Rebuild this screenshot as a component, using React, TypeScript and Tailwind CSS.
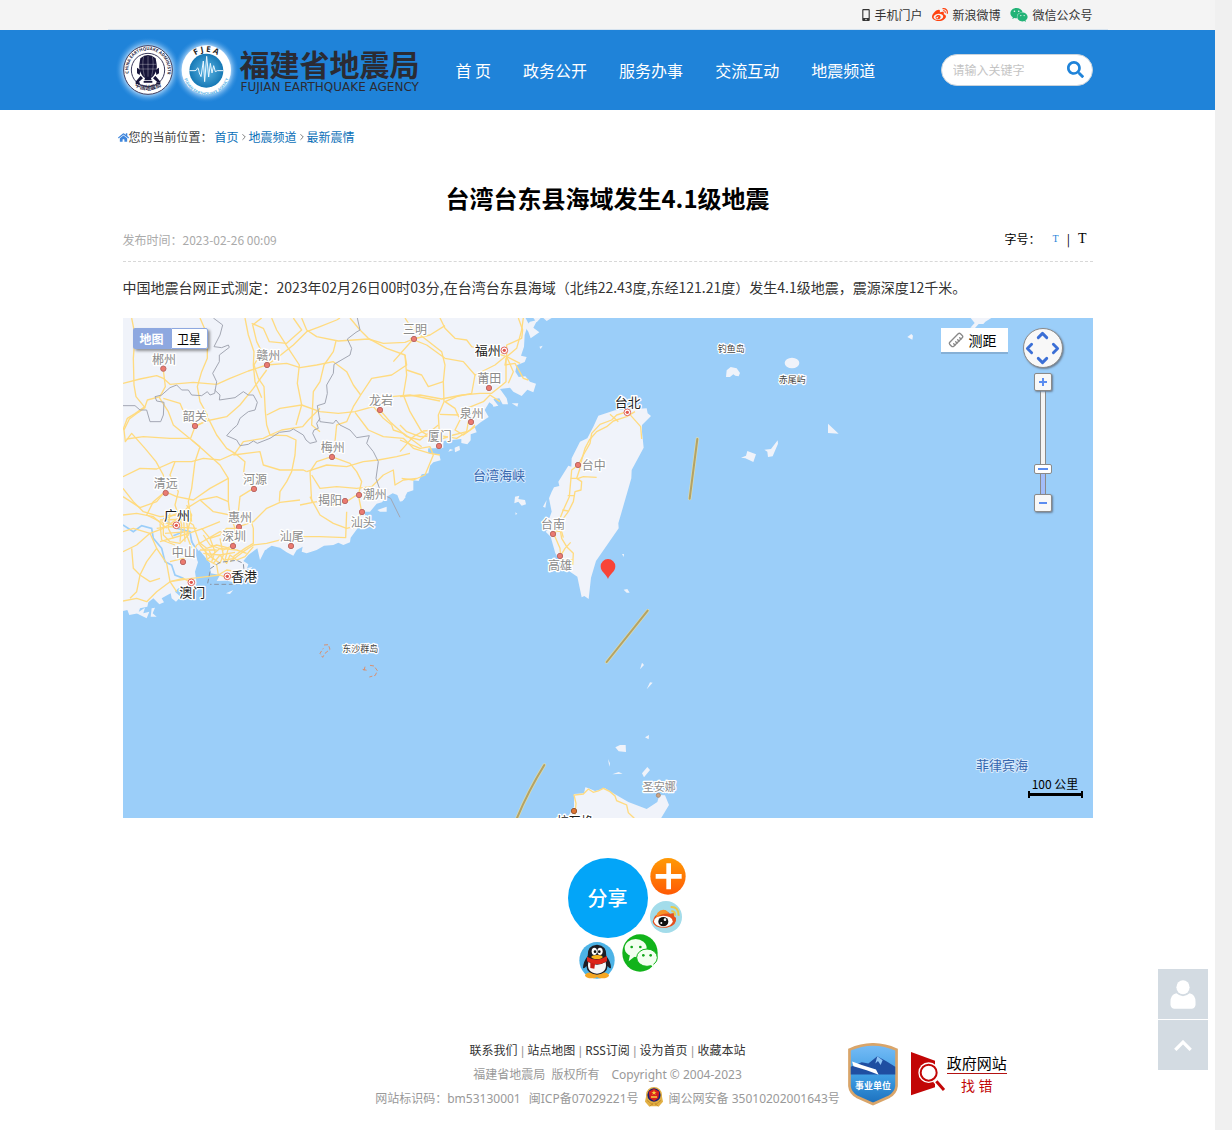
import { FaHome, FaMobileAlt, FaSearch, FaWeibo, FaWeixin } from "react-icons/fa";
import {
  ChevronDown,
  ChevronLeft,
  ChevronRight,
  ChevronUp,
  Ruler,
} from "lucide-react";

const navItems = ["首 页", "政务公开", "服务办事", "交流互动", "地震频道"];

const footerLinks = ["联系我们", "站点地图", "RSS订阅", "设为首页", "收藏本站"];

interface Place {
  name: string;
  x: number;
  y: number;
  dotX: number;
  dotY: number;
}

// map units are a third of a pixel
const cities: Place[] = [
  { name: "三明", x: 876, y: 48, dotX: 873, dotY: 63 },
  { name: "郴州", x: 123, y: 137, dotX: 121, dotY: 152 },
  { name: "赣州", x: 436, y: 126, dotX: 432, dotY: 141 },
  { name: "韶关", x: 215, y: 310, dotX: 216, dotY: 324 },
  { name: "龙岩", x: 774, y: 262, dotX: 771, dotY: 276 },
  { name: "梅州", x: 629, y: 403, dotX: 627, dotY: 417 },
  { name: "清远", x: 128, y: 509, dotX: 128, dotY: 525 },
  { name: "河源", x: 396, y: 499, dotX: 393, dotY: 513 },
  { name: "揭阳", x: 621, y: 562, dotX: 666, dotY: 549 },
  { name: "潮州", x: 755, y: 544, dotX: 708, dotY: 531 },
  { name: "汕头", x: 719, y: 626, dotX: 717, dotY: 582 },
  { name: "惠州", x: 351, y: 612, dotX: 348, dotY: 627 },
  { name: "深圳", x: 333, y: 670, dotX: 330, dotY: 684 },
  { name: "汕尾", x: 506, y: 669, dotX: 504, dotY: 684 },
  { name: "中山", x: 182, y: 717, dotX: 180, dotY: 732 },
  { name: "莆田", x: 1099, y: 195, dotX: 1098, dotY: 210 },
  { name: "泉州", x: 1046, y: 299, dotX: 1044, dotY: 312 },
  { name: "厦门", x: 950, y: 369, dotX: 948, dotY: 384 },
  { name: "台中", x: 1412, y: 455, dotX: 1365, dotY: 441 },
  { name: "台南", x: 1290, y: 633, dotX: 1290, dotY: 648 },
  { name: "高雄", x: 1311, y: 756, dotX: 1311, dotY: 714 },
];

const capitals: Place[] = [
  { name: "福州", x: 1094, y: 112, dotX: 1144, dotY: 97 },
  { name: "广州", x: 162, y: 607, dotX: 160, dotY: 622 },
  { name: "香港", x: 363, y: 788, dotX: 313, dotY: 775 },
  { name: "澳门", x: 208, y: 838, dotX: 205, dotY: 793 },
  { name: "台北", x: 1514, y: 267, dotX: 1513, dotY: 283 },
];

const roads = [
  "35 9 45 60 40 130 42 210 48 245 75 278 55 292 28 312 12 345 16 380 35 355 75 400 108 440 130 480 135 530",
  "9 345 22 310 45 296 75 275 82 255 120 245",
  "130 165 136 215 118 248 145 290 160 330 190 355 215 375 250 405 300 450 325 490 325 560 330 600",
  "9 205 60 192 110 182 130 190 150 208 220 202 290 208 330 190 385 168 440 150 470 130 520 90 560 50 600 35 650 15 660 9",
  "240 9 262 60 262 130 245 170 232 215 240 260 262 300 255 320 225 335 212 370 150 370 70 365 20 372",
  "130 250 180 265 195 300 225 333 258 318 320 305 360 270 400 220 440 165",
  "265 310 290 360 320 400 345 415 370 380 430 370 450 360 500 362 528 375 525 420 515 470 500 500 480 530 478 560",
  "375 9 385 60 402 110 400 150 405 200 425 248",
  "402 150 415 190 432 215 436 290 440 330 450 360 485 345 548 335 565 315 600 280",
  "425 9 398 30 410 80 425 110 402 150",
  "395 25 430 40 448 80 500 85 545 45 520 9",
  "455 9 470 45 505 100 538 150 532 205 545 270 528 330",
  "440 150 500 145 540 158 590 150 640 140 680 170 700 210 722 240",
  "545 9 560 45 590 65 655 78 745 72 790 85 855 82 880 72",
  "648 78 640 110 612 150 600 200 580 230 575 330 600 350",
  "440 300 480 280 545 270 600 290 655 295 705 290 760 275 815 245 870 240 960 258",
  "722 240 700 275 680 320 650 330 645 380 635 425 590 440 570 470 575 560",
  "722 240 755 190 815 180 860 150 855 120 800 100 745 70 720 45 690 9",
  "705 292 745 345 790 365 850 370 880 400 930 415 960 420",
  "780 285 810 320 860 365 900 375 930 350 955 330",
  "760 275 790 310 815 330 820 345 850 355 905 395",
  "855 9 875 40 965 110 975 150 970 200 972 260 955 300 958 355",
  "855 120 860 180 850 240 870 290 905 350 940 370",
  "635 425 690 445 710 470 725 500 715 540 725 590 700 640",
  "560 470 620 450 680 455 730 440 775 435 830 425 870 415",
  "575 480 600 520 650 515 710 520 755 515",
  "755 515 790 480 820 465 825 510 850 495 890 490",
  "540 570 590 560 640 570 680 560 710 540",
  "570 545 600 600 640 625 680 640 720 630",
  "680 590 677 668 600 665 520 665 440 685 400 690 370 710 330 740",
  "345 415 375 440 370 480 400 520 360 545 355 590 330 610",
  "340 420 420 410 430 450 480 465 550 465 560 470",
  "9 485 60 460 110 462 160 440 215 440 250 430 300 435 345 415",
  "9 545 60 578 110 560 135 530 170 545 220 555 270 520 325 490",
  "9 520 40 560 70 590 120 605 170 600",
  "9 600 50 595 100 605 140 640",
  "215 375 240 395 225 440 215 520 205 560 215 620",
  "135 530 100 560 80 600 120 620 165 630",
  "165 440 150 480 175 530 165 570 175 600",
  "325 560 290 545 240 555 200 580 175 610 130 640 90 655 40 640 9 650",
  "240 555 280 590 330 600 345 640 340 690",
  "357 635 400 620 440 580 480 562 540 555",
  "385 590 400 640 400 685 375 700 340 725",
  "9 710 50 690 90 655 110 700 80 740 60 780 90 800 120 790",
  "35 700 40 760 60 780 50 830 30 850",
  "9 858 50 850 80 860 110 830 150 800 190 790 214 803",
  "110 700 140 745 150 800 170 830",
  "150 740 190 730 215 720 230 690",
  "150 800 215 790 260 785 300 780 325 790",
  "130 615 130 660 150 680 180 685 205 660 200 620 170 595 130 615",
  "150 590 145 640 160 670 M175 595 185 630 180 680 M110 640 150 635 230 640",
  "120 615 215 612 M135 655 205 650 M190 600 195 680 M120 625 125 675 165 690",
  "120 680 190 660 250 640 300 620 M200 570 215 600 200 660 215 700",
  "175 600 220 630 240 690 265 720 300 745",
  "235 680 260 700 290 690 330 700 M250 715 300 720 345 712 M270 670 285 710 275 740",
  "300 670 310 720 300 745 M250 660 270 690 310 705 340 690",
  "280 745 300 720 320 745 330 720 350 735 375 725 400 695",
  "245 640 270 670 300 660 320 640 350 640 M230 690 300 650 360 660",
  "260 735 300 700 350 705 380 715 M290 750 295 780 320 765 350 770",
  "255 700 262 735 290 750 M268 708 280 735 M325 700 315 735 345 730 M240 705 290 705",
  "870 70 920 90 975 130 1030 140 1065 180 1125 150 1155 125",
  "960 9 975 40 1005 70 1040 75 1055 95 1130 115 1160 125 1200 145",
  "975 32 930 60 880 72 820 140",
  "840 245 900 240 965 252 1025 240 1080 235 1115 235 1140 215 1158 200 1158 130",
  "1065 180 1055 235 1010 245 975 260 1005 280 1020 315 1005 345 1030 360 1065 335",
  "860 165 905 180 925 215 970 200",
  "1210 9 1205 45 1190 100 1160 125 1155 150 1185 145 1210 190 1225 195",
  "1195 9 1208 45 1205 70 1160 90 1160 125 1180 170 1165 205",
  "840 330 860 350 900 365 960 362 1010 370 1050 345 1065 330",
  "925 380 955 375 1000 360 1040 350 1045 320 1080 290",
  "960 298 1015 300 1040 280 1090 260 1110 240 1140 260",
  "840 410 880 365 910 348 945 345",
  "840 375 900 400 930 395 940 420 915 480 880 495 845 490",
];

const taiwanRoads = [
  "682 290 650 300 635 315 600 328 575 355 570 385 550 420 535 450 515 465 512 500 508 545 490 585 480 610 470 630 465 665 480 700 482 722",
  "705 290 680 305 640 318 620 335 590 350 568 375 555 400 545 435 540 460 530 490 545 500 543 525 525 530 520 560 505 590 490 610 478 630 485 670 500 695 520 715 518 750",
  "630 298 655 320 M682 290 722 335 725 372 M512 490 535 490 550 485 590 487 M503 542 525 542 M487 585 505 588 M470 648 485 650 490 668",
  "482 722 495 700 512 682 M482 735 518 735",
];

const borders = [
  "280 9 308 30 300 60 282 95 305 98 325 90 328 97 298 120 298 140 278 175 290 200 284 235 270 240 262 230 245 242 215 240 205 225 185 225 170 210 150 218 125 240 105 245 110 258 132 262 130 300 122 320 90 320 80 285 60 285 45 272 9 272",
  "284 225 300 240 298 255 345 248 370 230 385 240 400 240 412 262 405 285 385 290 372 300 360 310 352 330 335 345 320 362 350 375 360 392 385 388 400 378 412 385 450 370 478 352 510 348 520 342 550 360 558 375 570 385 590 380 578 355 582 345 595 340 590 325 600 310",
  "712 9 720 45 708 52 682 72 695 100 690 120 642 148 640 175 620 210 622 235 615 265 592 272 600 320 640 325 648 315 660 330 690 345 710 368 748 362 740 385 760 410 775 440 768 490 780 525 790 540 812 550 840 607",
];

const pathFrom = (points: string) => `M${points}`;

function MapCanvas() {
  return (
    <svg
      viewBox="0 0 2910 1500"
      preserveAspectRatio="xMidYMid slice"
      className="block h-full w-full font-['Noto_Sans_CJK_SC',sans-serif]"
      role="img"
      aria-label="震中位置图"
    >
      <rect width="2910" height="1500" fill="#9bcef9" />

      {/* mainland and the islands off it */}
      <g transform="translate(-9 -9)">
        <path
          fill="#f0f3fa"
          d="M0 0H1212L1225 25 1214 60 1212 95 1203 122 1220 126 1214 141 1190 151 1186 170 1196 186 1216 184 1230 200 1248 206 1240 232 1222 224 1205 243 1180 230 1170 218 1140 222 1160 250 1164 268 1148 268 1138 250 1120 252 1126 275 1108 262 1094 285 1106 306 1082 322 1064 336 1070 352 1052 358 1052 376 1042 388 1024 384 1024 372 990 376 970 378 970 398 955 402 925 400 925 412 958 420 962 436 940 442 930 452 925 475 905 478 896 498 880 496 880 526 862 532 850 555 840 560 832 540 818 535 800 545 786 562 770 566 750 590 735 590 735 610 720 630 705 650 692 668 690 682 670 690 655 683 640 690 612 692 590 705 560 715 545 710 548 695 530 705 520 722 500 712 480 698 455 692 440 702 435 735 420 735 412 700 385 720 370 738 385 748 378 770 355 770 372 790 350 805 322 797 290 798 300 780 272 775 270 745 258 730 238 705 228 720 234 742 225 770 230 805 222 822 210 818 205 828 175 820 165 830 182 845 168 860 155 850 152 835 125 850 132 862 118 868 100 850 85 862 82 875 60 880 55 895 28 900 22 885 0 890Z"
        />
        <path
          fill="#f0f3fa"
          d="M50 895 75 878 70 895 88 890 80 910 60 900ZM95 880 105 878 98 895 110 905 92 905ZM772 585 800 575 800 590 780 590ZM318 835 340 825 330 837ZM840 545 858 545 845 560ZM380 760 398 755 388 765ZM1004 398 1018 392 1020 405 1005 412ZM990 402 1000 405 985 410ZM1175 265 1195 265 1192 275ZM1215 35 1230 20 1252 15 1240 38 1258 52 1232 70 1225 50ZM1240 9 1262 9 1250 22ZM1270 9 1295 9 1280 18ZM1258 95 1268 92 1262 102ZM1185 545 1198 542 1195 552 1215 555 1218 568 1205 572 1195 560 1183 565ZM1186 592 1192 596 1187 600ZM1269 575 1280 555 1276 578ZM1110 240 1135 272 1120 275Z"
        />
        <path
          fill="none"
          stroke="#9bcef9"
          strokeWidth="5"
          d="M9 630 40 650 65 632 95 640 100 670 125 700 135 740 155 750 165 780 190 790M130 610 170 640 210 650 215 680 235 712M190 650 160 662"
        />
        <path
          fill="#9bcef9"
          d="M205 640 218 690 240 712 234 740 224 700ZM925 402 960 398 950 412 925 415ZM420 735 435 705 460 700 440 738Z"
        />
        <g fill="none" stroke="#ffdb80" strokeWidth="4" strokeLinejoin="round">
          {roads.map((road) => (
            <path key={road} d={pathFrom(road)} />
          ))}
        </g>
        <g fill="none" stroke="#a3a7b3" strokeWidth="3" strokeLinejoin="round">
          {borders.map((border) => (
            <path key={border} d={pathFrom(border)} />
          ))}
        </g>
        <path
          fill="none"
          stroke="#8a93a3"
          strokeWidth="3"
          strokeDasharray="14 8"
          d="M263 805 272 760 300 742 350 736 370 745 375 800 340 808 270 808"
        />
      </g>

      {/* Taiwan */}
      <g transform="translate(831 -9)">
        <path
          fill="#f0f3fa"
          d="M595 302 645 286 740 280 743 295 753 303 726 330 726 350 731 398 695 465 694 490 655 625 656 640 588 738 573 788 566 852 553 843 545 847 532 785 510 770 500 745 478 735 466 715 452 665 437 650 450 640 448 610 455 590 447 550 455 530 462 517 478 513 475 500 505 452 514 455 515 430 540 380 562 370 580 335Z"
        />
        <g fill="none" stroke="#ffdb80" strokeWidth="4" strokeLinejoin="round">
          {taiwanRoads.map((road) => (
            <path key={road} d={pathFrom(road)} />
          ))}
        </g>
        <path
          fill="#f0f3fa"
          d="M666 717 672 717 671 726ZM671 824 682 822 689 833 680 833Z"
        />
      </g>

      {/* islets to the east */}
      <g transform="translate(1731 -9)" fill="#f0f3fa">
        <path d="M78 186 80 166 92 156 110 160 120 174 116 184 106 182 100 178 90 186Z" />
        <ellipse cx="276" cy="144" rx="22" ry="16" />
        <path d="M384 326 416 356 384 354ZM193 404 213 402 233 376 234 386 218 424 204 426 202 410ZM123 428 138 422 142 408 168 418 160 441 136 430ZM622 66 634 57 639 62 637 74ZM812 9 874 9 856 20 850 27 836 27 825 39 811 38 824 24Z" />
      </g>

      {/* Luzon and the strait islands */}
      <g transform="translate(531 846)">
        <path
          fill="#f0f3fa"
          d="M800 660 812 635 822 620 822 582 852 580 856 562 866 565 885 573 915 565 940 580 985 606 1040 627 1072 606 1078 585 1095 586 1107 615 1080 660Z"
        />
        <path
          fill="none"
          stroke="#ffdb80"
          strokeWidth="4"
          d="M825 645 828 610 822 585 850 582 865 567 880 577 895 573 910 565 930 575 945 588 950 602 980 615 985 638 1003 655"
        />
        <path
          fill="#f0f3fa"
          d="M1026 188 1032 195 1020 208ZM1050 247 1058 248 1040 268ZM1035 412 1047 405 1046 418ZM946 442 960 435 977 435 978 456 956 454ZM924 477 930 490 928 500ZM937 523 956 516 968 521ZM1026 520 1042 501 1050 510 1032 532Z"
        />
        <g fill="none" stroke="#d9906f" strokeWidth="3" strokeDasharray="12 6">
          <path d="M72 135 85 134 90 148 75 160 68 172 60 160 70 145" />
          <path d="M188 208 205 212 M210 196 222 198 232 212 226 226 208 231 M195 200 192 212" />
        </g>
      </g>

      {/* sea boundary segments */}
      <g fill="none" strokeLinecap="round">
        <g stroke="#dcdcae" strokeWidth="10">
          <path d="M1723 363 1700 542M1574 878 1451 1032M1264 1341Q1215 1420 1180 1505" />
        </g>
        <g stroke="#b3a266" strokeWidth="6">
          <path d="M1723 363 1700 542M1574 878 1451 1032M1264 1341Q1215 1420 1180 1505" />
        </g>
      </g>

      <g
        fontSize="36"
        textAnchor="middle"
        fill="#8b8b8b"
        stroke="#ffffff"
        strokeWidth="8"
        strokeLinejoin="round"
        paintOrder="stroke"
      >
        {cities.map((city) => (
          <g key={city.name}>
            <text x={city.x} y={city.y}>
              {city.name}
            </text>
            <circle
              cx={city.dotX}
              cy={city.dotY}
              r="8"
              fill="#eb7a70"
              stroke="#bb6a66"
              strokeWidth="3"
              paintOrder="normal"
            />
          </g>
        ))}
        <text x="1609" y="1420" fontSize="33">
          圣安娜
        </text>
        <circle
          cx="1606"
          cy="1432"
          r="6"
          fill="#c9a283"
          stroke="#a98a72"
          strokeWidth="3"
          paintOrder="normal"
        />
      </g>

      <g
        fontSize="39"
        textAnchor="middle"
        fill="#1c1c1c"
        stroke="#ffffff"
        strokeWidth="8"
        strokeLinejoin="round"
        paintOrder="stroke"
      >
        {capitals.map((city) => (
          <g key={city.name}>
            <text x={city.x} y={city.y}>
              {city.name}
            </text>
            <circle
              cx={city.dotX}
              cy={city.dotY}
              r="10"
              fill="#ffffff"
              stroke="#e0655c"
              strokeWidth="3"
              paintOrder="normal"
            />
            <circle cx={city.dotX} cy={city.dotY} r="5" fill="#e0554c" stroke="none" />
          </g>
        ))}
        <circle
          cx="1353"
          cy="1479"
          r="8"
          fill="#e07533"
          stroke="#9a5a34"
          strokeWidth="3"
          paintOrder="normal"
        />
        <text x="1355" y="1525" fontSize="36">
          拉瓦格
        </text>
        <g fontSize="27" fill="#444444" strokeWidth="7">
          <text x="1825" y="101">
            钓鱼岛
          </text>
          <text x="2008" y="194">
            赤尾屿
          </text>
          <text x="712" y="1003">
            东沙群岛
          </text>
        </g>
        <g fill="#3566ae" strokeWidth="6" stroke="#d8eafc">
          <text x="1128" y="486">
            台湾海峡
          </text>
          <text x="2637" y="1355">
            菲律宾海
          </text>
        </g>
      </g>

      {/* epicentre */}
      <path
        fill="#f84438"
        d="M1455 783C1450 768 1433 762 1433 745A22 22 0 0 1 1477 745C1477 762 1460 768 1455 783Z"
      />
    </svg>
  );
}

function MapControls() {
  const arrow = "flex items-center justify-center text-[#3b6fd6]";
  const zoomButton =
    "relative h-[18px] w-[18px] rounded-xs border border-[#8a8a8a] bg-[#f8f8f8] shadow-[1px_1px_2px_#6b7f95]";

  return (
    <div className="absolute top-[10px] right-[30px] flex w-10 flex-col items-center">
      <div className="grid h-10 w-10 grid-cols-3 grid-rows-3 rounded-full border border-[#8a8a8a] bg-[#f8f8f8] shadow-[1px_1px_2px_#6b7f95]">
        <button type="button" aria-label="向上" className={`${arrow} col-start-2 row-start-1`}>
          <ChevronUp size={17} strokeWidth={4} className="shrink-0" />
        </button>
        <button type="button" aria-label="向左" className={`${arrow} col-start-1 row-start-2`}>
          <ChevronLeft size={17} strokeWidth={4} className="shrink-0" />
        </button>
        <button type="button" aria-label="向右" className={`${arrow} col-start-3 row-start-2`}>
          <ChevronRight size={17} strokeWidth={4} className="shrink-0" />
        </button>
        <button type="button" aria-label="向下" className={`${arrow} col-start-2 row-start-3`}>
          <ChevronDown size={17} strokeWidth={4} className="shrink-0" />
        </button>
      </div>
      <button type="button" aria-label="放大" className={`${zoomButton} z-10 mt-[5px]`}>
        <svg viewBox="0 0 16 16" className="h-4 w-4">
          <path d="M8 4v8M4 8h8" stroke="#5b8df0" strokeWidth="2" />
        </svg>
      </button>
      <input
        type="range"
        aria-label="缩放级别"
        min={0}
        max={100}
        defaultValue={79}
        className="block h-[103px] w-[18px] appearance-none bg-transparent [writing-mode:vertical-lr] [&::-webkit-slider-runnable-track]:w-[6px] [&::-webkit-slider-runnable-track]:border-r [&::-webkit-slider-runnable-track]:border-l [&::-webkit-slider-runnable-track]:border-[#8a8a8a] [&::-webkit-slider-runnable-track]:bg-[linear-gradient(#f4f4f4_75%,#a3bdfa_75%)] [&::-webkit-slider-thumb]:-ml-[7px] [&::-webkit-slider-thumb]:h-[10px] [&::-webkit-slider-thumb]:w-[18px] [&::-webkit-slider-thumb]:appearance-none [&::-webkit-slider-thumb]:rounded-xs [&::-webkit-slider-thumb]:border [&::-webkit-slider-thumb]:border-[#8a8a8a] [&::-webkit-slider-thumb]:bg-white [&::-webkit-slider-thumb]:bg-[linear-gradient(#5b8df0,#5b8df0)] [&::-webkit-slider-thumb]:bg-[length:10px_2px] [&::-webkit-slider-thumb]:bg-center [&::-webkit-slider-thumb]:bg-no-repeat"
      />
      <button type="button" aria-label="缩小" className={zoomButton}>
        <svg viewBox="0 0 16 16" className="h-4 w-4">
          <path d="M4 8h8" stroke="#5b8df0" strokeWidth="2" />
        </svg>
      </button>
    </div>
  );
}

function QuakeMap() {
  return (
    <div className="relative mt-[17px] h-[500px] overflow-hidden">
      <MapCanvas />
      <div className="absolute top-[10px] left-[10px] flex h-[21px] rounded-xs text-xs shadow-[2px_2px_3px_rgba(0,0,0,0.4)]">
        <button type="button" className="w-[38px] rounded-l-xs bg-[#8ea8e0] font-bold text-white">
          地图
        </button>
        <button
          type="button"
          className="w-[37px] rounded-r-xs border border-[#8ea8e0] bg-white text-black"
        >
          卫星
        </button>
      </div>
      <button
        type="button"
        className="absolute top-[10px] right-[85px] flex h-6 w-[67px] items-center gap-[5px] bg-white pl-[7px] text-sm text-black shadow-[0_2px_0_#86b0d6]"
      >
        <Ruler size={16} className="rotate-90 text-[#888888]" />
        测距
      </button>
      <MapControls />
      <div className="absolute right-[10px] bottom-[20px] w-[55px]">
        <div className="text-center text-xs leading-[15px] text-black">100 公里</div>
        <div className="h-[7px] border-x-2 border-black pt-[2px]">
          <div className="h-[3px] bg-black" />
        </div>
      </div>
    </div>
  );
}

function Emblems() {
  return (
    <svg
      viewBox="0 0 324 150"
      className="h-[50px] w-[108px] shrink-0 overflow-visible font-['Open_Sans','Noto_Sans_CJK_SC',sans-serif]"
      aria-hidden="true"
    >
      <defs>
        <radialGradient id="glow">
          <stop offset="0.7" stopColor="#cfe8ff" />
          <stop offset="1" stopColor="#2b8de0" stopOpacity="0" />
        </radialGradient>
        <radialGradient id="disc">
          <stop offset="0" stopColor="#5fb6e4" />
          <stop offset="1" stopColor="#1578b5" />
        </radialGradient>
        <path id="top-arc" d="M17 85A59 59 0 1 1 133 85" />
        <path id="bottom-arc" d="M16 102A69 69 0 0 0 134 102" />
        <path id="fjea-arc" d="M198 54A57 57 0 0 1 302 54" />
        <path id="fjea-bottom" d="M181 82A69 69 0 0 0 319 82" />
      </defs>

      <circle cx="75" cy="75" r="98" fill="url(#glow)" />
      <circle cx="75" cy="75" r="73" fill="#ffffff" stroke="#3b3a5c" strokeWidth="3" />
      <circle cx="75" cy="75" r="50" fill="none" stroke="#3b3a5c" strokeWidth="3" />
      <text fontSize="13" fontWeight="bold" fill="#2a2947">
        <textPath href="#top-arc">CHINA EARTHQUAKE ADMINISTRATION</textPath>
      </text>
      <text fontSize="17" fontWeight="bold" fill="#2a2947" textAnchor="middle">
        <textPath href="#bottom-arc" startOffset="50%">
          中国地震局
        </textPath>
      </text>
      <g fill="#17153a">
        <path d="M52 40Q75 20 98 40L101 58Q104 75 92 92L86 98H64L58 92Q46 75 49 58Z" />
        <path d="M42 68l10 6-2 16-8-5ZM108 68l-10 6 2 16 8-5ZM53 92l7 8-16 14-7-3ZM97 92l-7 8 16 14 7-3ZM67 96h16l3 10H64ZM38 112h12v5H38ZM100 112h12v5h-12ZM62 108h26v5H62Z" />
      </g>
      <path
        d="M50 58H100M48 72H102M75 32V95M62 34Q56 60 64 94M88 34Q94 60 86 94"
        fill="none"
        stroke="#ffffff"
        strokeOpacity="0.45"
        strokeWidth="2"
      />

      <circle cx="250" cy="75" r="98" fill="url(#glow)" />
      <circle cx="250" cy="75" r="74" fill="#ffffff" />
      <circle cx="250" cy="77" r="51" fill="url(#disc)" />
      <text fontSize="24" fontWeight="bold" fill="#222222" textAnchor="middle">
        <textPath href="#fjea-arc" startOffset="50%">
          F J E A
        </textPath>
      </text>
      <text fontSize="12" fontWeight="bold" fill="#58b2e6" textAnchor="middle">
        <textPath href="#fjea-bottom" startOffset="50%">
          FUJIAN EARTHQUAKE AGENCY
        </textPath>
      </text>
      <path
        d="M199 77H216Q221 77 223 70T229 84L234 95 241 48 245 110 251 34 257 96 262 55 267 84 272 62 277 80 283 77H301"
        fill="none"
        stroke="#eaf7ff"
        strokeWidth="3"
      />
    </svg>
  );
}

function TopBar() {
  return (
    <div className="bg-[#f4f4f4]">
      <div className="mx-auto flex h-[30px] max-w-[1000px] items-center justify-end gap-[10px] border-b border-[#d6e3ef] px-[15px] text-xs text-[#333333]">
        <a href="#mobile" className="flex items-center gap-1">
          <FaMobileAlt size={12} className="w-2" />
          手机门户
        </a>
        <a href="#weibo" className="flex items-center gap-1">
          <FaWeibo size={16} color="#ff4310" />
          新浪微博
        </a>
        <a href="#wechat" className="flex items-center gap-1">
          <FaWeixin size={18} color="#23b377" />
          微信公众号
        </a>
      </div>
    </div>
  );
}

function Header() {
  return (
    <header className="bg-[#1f83d9]">
      <div className="mx-auto flex h-20 max-w-[1000px] items-center px-[15px]">
        <a href="#home" className="flex shrink-0 items-center gap-[9px]">
          <Emblems />
          <span className="block w-[181px] text-[#2b2b33]">
            <span className="block text-[30px] leading-[34px] font-bold">福建省地震局</span>
            <span className="block pl-px font-['DejaVu_Sans',sans-serif] text-xs leading-[14px] whitespace-nowrap">
              FUJIAN EARTHQUAKE AGENCY
            </span>
          </span>
        </a>
        <nav className="ml-[35px] flex gap-8 text-base whitespace-nowrap text-white">
          {navItems.map((item) => (
            <a key={item} href="#nav">
              {item}
            </a>
          ))}
        </nav>
        <form className="ml-auto flex h-8 w-[152px] items-center rounded-full border border-[#c9d3dc] bg-white pr-2 pl-[11px]">
          <input
            type="text"
            aria-label="搜索"
            placeholder="请输入关键字"
            className="w-full min-w-0 text-xs outline-none placeholder:text-[#c4c4c4]"
          />
          <button type="submit" aria-label="搜索" className="pb-[2px] text-[#1f83d9]">
            <FaSearch size={17} />
          </button>
        </form>
      </div>
    </header>
  );
}

function Article() {
  return (
    <main className="mx-auto w-full max-w-[1000px]">
      <div className="flex h-[54px] items-center px-[10px] text-xs text-[#444444]">
        <FaHome size={11} color="#3f86dc" />
        您的当前位置：
        <span className="ml-[2px] flex items-center text-[#0a6fb8]">
          <a href="#home">首页</a>
          <ChevronRight size={10} strokeWidth={2} className="text-[#666666]" />
          <a href="#channel">地震频道</a>
          <ChevronRight size={10} strokeWidth={2} className="text-[#666666]" />
          <a href="#latest">最新震情</a>
        </span>
      </div>

      <article className="px-[15px]">
        <h1 className="mt-4 pb-[2px] text-center text-2xl leading-9 font-bold text-black">
          台湾台东县海域发生4.1级地震
        </h1>
        <div className="flex h-[44px] items-center justify-between border-b border-dashed border-[#d8d8d8] text-xs">
          <time className="text-[#aaaaaa]">发布时间：2023-02-26 00:09</time>
          <div className="flex items-center pb-[2px] text-black">
            字号：
            <button type="button" className="ml-3 font-['Liberation_Serif',serif] text-[10px] text-[#1f83d9]">
              T
            </button>
            <span className="mx-2">|</span>
            <button type="button" className="mr-[6px] font-['Liberation_Serif',serif] text-sm">
              T
            </button>
          </div>
        </div>
        <p className="mt-[11px] text-sm leading-7 text-[#333333]">
          中国地震台网正式测定：2023年02月26日00时03分,在台湾台东县海域（北纬22.43度,东经121.21度）发生4.1级地震，震源深度12千米。
        </p>
        <QuakeMap />
      </article>
    </main>
  );
}

function ShareWheel() {
  return (
    <div className="relative mx-auto mt-10 h-20 w-20">
      <button
        type="button"
        className="h-20 w-20 rounded-full bg-[#03a5f8] text-xl font-medium text-white"
      >
        分享
      </button>
      <a href="#more" aria-label="更多" className="absolute top-0 left-[82px]">
        <svg viewBox="0 0 108 111" className="h-[37px] w-9">
          <defs>
            <linearGradient id="plus-fill" x2="0" y2="1">
              <stop offset="0" stopColor="#ff9a05" />
              <stop offset="1" stopColor="#ff5a05" />
            </linearGradient>
          </defs>
          <ellipse cx="54" cy="55" rx="53" ry="55" fill="url(#plus-fill)" />
          <path d="M56 16V94M17 55H95" stroke="#ffffff" strokeWidth="14" />
        </svg>
      </a>
      <a href="#weibo" aria-label="分享到微博" className="absolute top-[43px] left-[82px]">
        <svg viewBox="0 0 96 96" className="h-8 w-8">
          <circle cx="48" cy="48" r="48" fill="#a3dcea" />
          <path
            d="M8 62Q12 40 36 32Q34 24 44 28Q56 34 60 38L72 36Q70 48 78 50Q82 74 50 80Q12 82 8 62Z"
            fill="#e5501d"
          />
          <path d="M22 36Q34 22 48 28L58 38Q36 36 18 50Z" fill="#f7932a" />
          <ellipse cx="40" cy="61" rx="28" ry="17" fill="#ffffff" />
          <ellipse cx="40" cy="62" rx="15" ry="14" fill="#111111" />
          <circle cx="45" cy="56" r="4" fill="#ffffff" />
          <circle cx="34" cy="66" r="3" fill="#ffffff" />
          <path
            d="M62 18Q86 16 86 44M64 30Q76 30 75 44"
            fill="none"
            stroke="#e9c94b"
            strokeWidth="6"
          />
        </svg>
      </a>
      <a href="#wechat" aria-label="分享到微信" className="absolute top-[76px] left-[54px]">
        <svg viewBox="0 0 108 114" className="h-[38px] w-9">
          <ellipse cx="54" cy="57" rx="53" ry="56" fill="#12b31b" />
          <ellipse cx="41" cy="42" rx="33" ry="27" fill="#f3fff0" />
          <path d="M24 62 20 82 40 66Z" fill="#f3fff0" />
          <ellipse cx="75" cy="71" rx="31" ry="26" fill="#f3fff0" stroke="#12b31b" strokeWidth="3" />
          <path d="M85 90 96 104 94 86Z" fill="#f3fff0" />
          <g fill="#12a51b">
            <circle cx="29" cy="39" r="4" />
            <circle cx="55" cy="39" r="4" />
            <circle cx="64" cy="64" r="4" />
            <circle cx="86" cy="64" r="4" />
          </g>
        </svg>
      </a>
      <a href="#qq" aria-label="分享到QQ" className="absolute top-[84px] left-[11px]">
        <svg viewBox="0 0 108 111" className="h-[37px] w-9">
          <ellipse cx="54" cy="55" rx="53" ry="55" fill="#4db3e6" />
          <ellipse cx="38" cy="100" rx="20" ry="9" fill="#f5a623" />
          <ellipse cx="70" cy="100" rx="20" ry="9" fill="#f5a623" />
          <path
            d="M54 8Q84 10 82 42Q96 60 96 78Q90 80 86 72Q84 96 54 98Q24 96 22 72Q18 80 12 78Q12 60 26 42Q24 10 54 8Z"
            fill="#1d1d24"
          />
          <path d="M28 60Q54 76 80 60Q86 92 54 95Q22 92 28 60Z" fill="#f7f7f7" />
          <path d="M24 44Q54 62 84 42L84 58Q54 76 24 58Z" fill="#dc2418" />
          <path d="M34 62 48 66 46 80 34 78Z" fill="#c81a12" />
          <ellipse cx="46" cy="28" rx="8" ry="11" fill="#ffffff" />
          <ellipse cx="63" cy="28" rx="8" ry="11" fill="#ffffff" />
          <circle cx="48" cy="29" r="4" fill="#111111" />
          <circle cx="61" cy="29" r="4" fill="#111111" />
          <ellipse cx="54" cy="45" rx="17" ry="6" fill="#f8b21c" />
        </svg>
      </a>
    </div>
  );
}

function PoliceBadge() {
  return (
    <svg viewBox="0 0 54 60" className="mx-[5px] mb-1 h-5 w-5" aria-hidden="true">
      <path d="M4 24 0 44 12 58H42L54 44 50 24Z" fill="#e2b044" />
      <path d="M6 40 24 54M48 40 30 54M14 58 27 46 40 58" fill="none" stroke="#c98f2c" strokeWidth="3" />
      <circle cx="27" cy="24" r="22" fill="#1c2170" stroke="#e2b044" strokeWidth="4" />
      <path d="M27 5 43 14 40 34 27 42 14 34 11 14Z" fill="#d8201c" />
      <path d="M27 9l2 6h6l-5 3 2 6-5-4-5 4 2-6-5-3h6ZM18 28H36V32H18Z" fill="#f7cf3c" />
    </svg>
  );
}

function InstitutionBadge() {
  return (
    <svg
      viewBox="0 0 150 190"
      className="h-[63px] w-[52px] font-['Noto_Sans_CJK_SC',sans-serif]"
    >
      <defs>
        <linearGradient id="shield-fill" x2="0" y2="1">
          <stop offset="0" stopColor="#78bdf7" />
          <stop offset="0.55" stopColor="#3d9ce2" />
          <stop offset="1" stopColor="#1b6fbd" />
        </linearGradient>
      </defs>
      <path
        d="M4 20Q75 -12 146 20V130Q144 150 124 162L75 184 26 162Q6 150 4 130Z"
        fill="url(#shield-fill)"
        stroke="#d9a56a"
        strokeWidth="8"
      />
      <path d="M8 72 41 58 61 62 88 40 114 54 142 72V95H8Z" fill="#1f4ea1" />
      <path d="M12 56 41 66 84 80 92 96 56 82 16 70Z" fill="#ffffff" />
      <path d="M88 40 82 62 90 54 98 66 104 52Z" fill="#8fc4f5" />
      <text x="75" y="138" fontSize="27" fontWeight="bold" fill="#ffffff" textAnchor="middle">
        事业单位
      </text>
    </svg>
  );
}

function ReportBadge() {
  return (
    <span className="flex items-center">
      <svg viewBox="0 0 102 132" className="h-[44px] w-[34px] overflow-visible" aria-hidden="true">
        <path d="M0 0 72 26V106L0 130Z" fill="#c20606" />
        <circle cx="53" cy="62" r="31" fill="#ffffff" />
        <circle cx="53" cy="62" r="24" fill="#ffffff" stroke="#c20606" strokeWidth="6" />
        <path d="M72 84 100 116" stroke="#ffffff" strokeWidth="16" />
        <path d="M76 88 99 114" stroke="#c20606" strokeWidth="9" />
      </svg>
      <span className="ml-[2px] text-center text-sm leading-5 whitespace-nowrap">
        <span className="block border-b border-[#b31212] text-[15px] text-black">政府网站</span>
        <span className="block pt-[2px] text-[#c20606]">找 错</span>
      </span>
    </span>
  );
}

function Footer() {
  return (
    <footer className="mx-auto mt-[101px] grid w-full grid-cols-[1fr_auto_1fr] pb-4 font-['Noto_Sans','Noto_Sans_CJK_SC',sans-serif] text-xs leading-6 text-[#999999]">
      <div className="col-start-2 text-center whitespace-nowrap">
        <div>
          {footerLinks.map((link, i) => (
            <span key={link}>
              {i > 0 && <span className="font-['Liberation_Sans',sans-serif]"> | </span>}
              <a href="#footer" className="text-[#333333]">
                {link}
              </a>
            </span>
          ))}
        </div>
        <div className="flex justify-center gap-3">
          <span className="whitespace-pre">福建省地震局  版权所有</span>
          <span>Copyright © 2004-2023</span>
        </div>
        <div className="flex h-6 items-center">
          <span className="mr-2">网站标识码：bm53130001</span>
          <a href="#icp">闽ICP备07029221号</a>
          <PoliceBadge />
          <a href="#police">闽公网安备 35010202001643号</a>
        </div>
      </div>
      <div className="flex items-start gap-3 pt-1 pl-[7px]">
        <a href="#institution" aria-label="事业单位">
          <InstitutionBadge />
        </a>
        <a href="#report" className="pt-[9px]">
          <ReportBadge />
        </a>
      </div>
    </footer>
  );
}

function FloatingTools() {
  return (
    <div className="fixed right-6 bottom-[60px] flex flex-col gap-px">
      <a href="#user" aria-label="用户中心" className="flex h-[50px] w-[50px] items-center justify-center bg-[#d3dbe2]">
        <svg viewBox="0 0 78 88" className="h-[29px] w-[26px]" fill="#ffffff">
          <ellipse cx="39" cy="22" rx="20" ry="21" />
          <path d="M19 40Q39 58 59 40Q77 44 77 66V76Q75 87 65 87H13Q3 87 1 76V66Q1 44 19 40Z" />
        </svg>
      </a>
      <a href="#top" aria-label="返回顶部" className="flex h-[50px] w-[50px] items-center justify-center bg-[#d3dbe2]">
        <svg viewBox="0 0 48 30" className="h-[11px] w-[18px]">
          <path d="M3 27 24 6 45 27" fill="none" stroke="#ffffff" strokeWidth="9" />
        </svg>
      </a>
    </div>
  );
}

export default function App() {
  return (
    <div className="flex min-h-screen bg-white font-['Noto_Sans_CJK_SC',sans-serif]">
      <div className="min-w-0 flex-1">
        <TopBar />
        <Header />
        <Article />
        <ShareWheel />
        <Footer />
      </div>
      <div className="w-[17px] shrink-0 bg-[#f0f0f0]" />
      <FloatingTools />
    </div>
  );
}
